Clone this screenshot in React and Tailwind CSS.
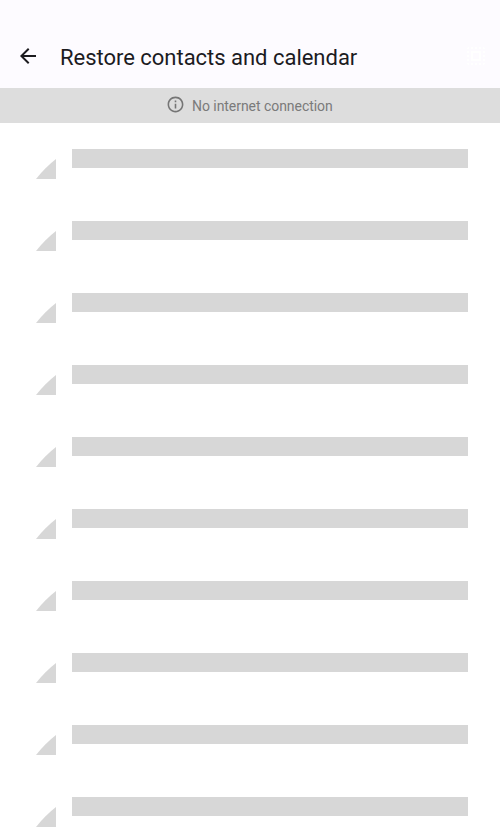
const rows = Array.from({ length: 10 }, (_, i) => i);

function BackIcon() {
  return (
    <svg className="size-6 shrink-0" viewBox="0 0 24 24" fill="#1c1b1f">
      <path d="M20 11H7.83l5.59-5.59L12 4l-8 8 8 8 1.41-1.41L7.83 13H20v-2z" />
    </svg>
  );
}

function SelectAllIcon() {
  return (
    <svg className="size-6 shrink-0" viewBox="0 0 24 24" fill="#ffffff">
      <path d="M3 5h2V3c-1.1 0-2 .9-2 2zm0 8h2v-2H3v2zm4 8h2v-2H7v2zM3 9h2V7H3v2zm10-6h-2v2h2V3zm6 0v2h2c0-1.1-.9-2-2-2zM5 21v-2H3c0 1.1.9 2 2 2zm-2-4h2v-2H3v2zM9 3H7v2h2V3zm2 18h2v-2h-2v2zm8-8h2v-2h-2v2zm0 8c1.1 0 2-.9 2-2h-2v2zm0-12h2V7h-2v2zm0 8h2v-2h-2v2zm-4 4h2v-2h-2v2zm0-16h2V3h-2v2zM7 17h10V7H7v10zm2-8h6v6H9V9z" />
    </svg>
  );
}

function InfoIcon() {
  return (
    <svg className="size-[19px] shrink-0" viewBox="0 0 24 24" fill="#757575">
      <path d="M11 7h2v2h-2zm0 4h2v6h-2zm1-9C6.48 2 2 6.48 2 12s4.48 10 10 10 10-4.48 10-10S17.52 2 12 2zm0 18c-4.41 0-8-3.59-8-8s3.59-8 8-8 8 3.59 8 8-3.59 8-8 8z" />
    </svg>
  );
}

function PlaceholderRow() {
  return (
    <li className="flex h-[72px] shrink-0 items-start gap-4 pr-8 pl-9">
      <svg className="mt-9 size-5 shrink-0" viewBox="0 0 20 20" fill="#d7d7d7">
        <path d="M0 20Q9 8.5 20 0V20Z" />
      </svg>
      <div className="mt-[26px] h-[19px] flex-1 bg-[#d7d7d7]" />
    </li>
  );
}

export default function App() {
  return (
    <div className="flex h-[833px] w-[500px] flex-col overflow-hidden bg-white font-['Roboto',sans-serif]">
      <header className="flex h-[88px] shrink-0 items-start bg-[#fdfbff] px-3 pt-11 pl-4">
        <BackIcon />
        <h1 className="ml-5 flex-1 text-[22px] leading-7 tracking-[-0.02px] whitespace-nowrap text-[#1c1b1f]">
          Restore contacts and calendar
        </h1>
        <SelectAllIcon />
      </header>
      <div className="flex h-[35px] shrink-0 items-start bg-[#dddddd] pt-[7px] pl-[165.5px]">
        <InfoIcon />
        <span className="mt-px ml-[7.5px] text-sm leading-5 tracking-[-0.05px] text-[#7a7a7a]">
          No internet connection
        </span>
      </div>
      <ul className="flex flex-col">
        {rows.map((row) => (
          <PlaceholderRow key={row} />
        ))}
      </ul>
    </div>
  );
}
